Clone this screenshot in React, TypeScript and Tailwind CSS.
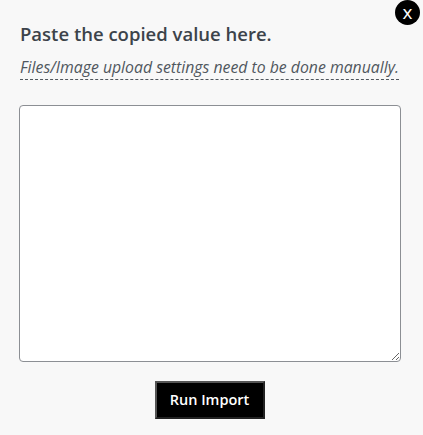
import React from "react";

export default function App() {
  return (
    <div className="relative w-[423px] h-[435px] bg-[#f8f8f8] overflow-hidden" style={{ fontFamily: '"Open Sans", "Noto Sans", sans-serif' }}>
      <button className="absolute left-[395px] top-0 w-[25px] h-[25px] rounded-full bg-black text-white text-[19px] leading-[21px] text-center">
        x
      </button>
      <div className="pl-[20px] pr-[22px] pt-[20px] flex flex-col">
        <h2 className="text-[18.5px] leading-[27px] font-semibold text-[#3c434a]">Paste the copied value here.</h2>
        <div className="mt-[8px] self-start">
          <span className="text-[15.8px] italic leading-[20px] text-[#50575e] border-b border-dashed border-[#50575e] pb-[2px] inline-block">
            Files/Image upload settings need to be done manually.
          </span>
        </div>
        <textarea className="mt-[25px] ml-[-1px] w-[382px] h-[257px] bg-white border border-[#8c8f94] rounded-[4px] resize-y" />
        <div className="flex justify-center mt-[19px] pr-[2px]">
          <button className="w-[110px] h-[38px] bg-black text-white text-[14.5px] font-semibold border-2 border-t-[#555] border-l-[#555] border-b-[#222] border-r-[#222]">
            Run Import
          </button>
        </div>
      </div>
    </div>
  );
}
